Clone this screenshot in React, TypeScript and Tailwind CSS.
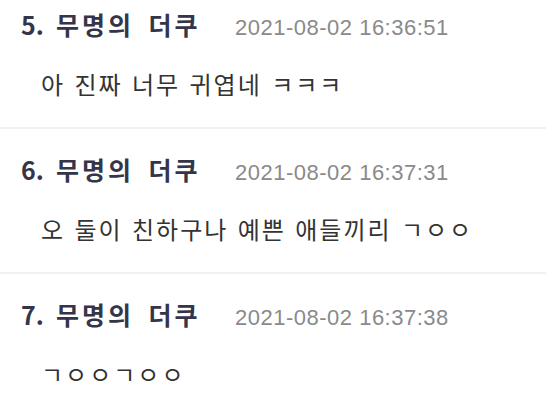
import React from 'react';

interface Comment {
  no: number;
  name: string;
  date: string;
  text: string;
}

const comments: Comment[] = [
  { no: 5, name: '무명의 더쿠', date: '2021-08-02 16:36:51', text: '아 진짜 너무 귀엽네 ㅋㅋㅋ' },
  { no: 6, name: '무명의 더쿠', date: '2021-08-02 16:37:31', text: '오 둘이 친하구나 예쁜 애들끼리 ㄱㅇㅇ' },
  { no: 7, name: '무명의 더쿠', date: '2021-08-02 16:37:38', text: 'ㄱㅇㅇㄱㅇㅇ' },
];

const CommentItem: React.FC<{ c: Comment }> = ({ c }) => {
  return (
    <li className="pt-[28px] pb-[27px] border-b-2 border-[#f1f1f1]">
      <div className="flex items-baseline h-[24px] pl-[21px]">
        <span className="w-[214px] shrink-0 text-[25px] leading-[24px] font-bold text-[#35354a] font-['Noto_Sans_CJK_KR',sans-serif]">
          <span className="mr-[12px]">{c.no}.</span>
          <span className="tracking-[3px] [word-spacing:6px]">{c.name}</span>
        </span>
        <span className="text-[22px] leading-[24px] tracking-[0.5px] text-[#8a8a8a] font-['Liberation_Sans',sans-serif]">
          {c.date}
        </span>
      </div>
      <p className="mt-[32px] pl-[41px] text-[24px] leading-[32px] text-[#333333] tracking-[2px] [word-spacing:2px] font-['Noto_Sans_CJK_KR',sans-serif]">
        {c.text}
      </p>
    </li>
  );
};

export default function App() {
  return (
    <div className="w-[546px] h-[405px] overflow-hidden bg-white">
      <ul className="-mt-[16px]">
        {comments.map((c) => (
          <CommentItem key={c.no} c={c} />
        ))}
      </ul>
    </div>
  );
}
